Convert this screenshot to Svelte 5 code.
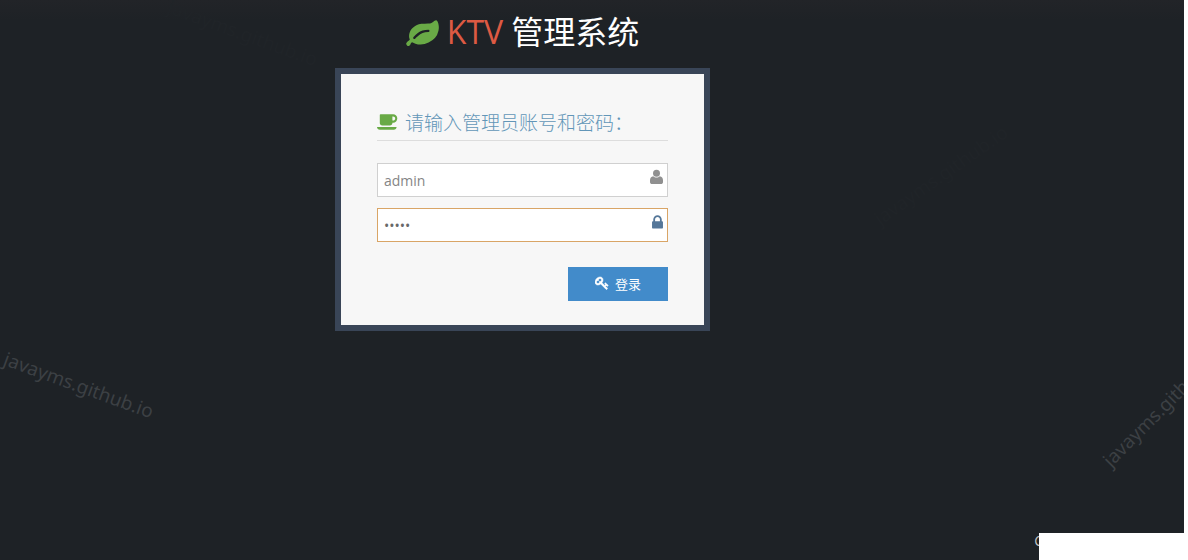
<script>
  let account = $state('admin');
  let password = $state('admin');

  function submit(event) {
    event.preventDefault();
  }
</script>

<div class="page">
  <span class="mark mark-left">javayms.github.io</span>
  <span class="mark mark-right">javayms.github.io</span>
  <span class="mark mark-faint mark-upper">javayms.github.io</span>
  <span class="mark mark-faint mark-top">javayms.github.io</span>

  <main class="login">
    <h1>
      <svg class="leaf" viewBox="0 0 1792 1536" aria-hidden="true"><path d="M1280 704q0-26-19-45t-45-19q-172 0-318 49.5t-259.5 134-235.5 219.5q-19 21-19 45 0 26 19 45t45 19q24 0 45-19 27-24 74-71t67-66q137-124 268.5-176t313.5-52q26 0 45-19t19-45zm512-198q0 95-20 193-46 224-184.5 383t-357.5 268q-214 108-438 108-148 0-286-47-15-5-88-42t-96-37q-16 0-39.5 32t-45 70-52.5 70-60 32q-43 0-63.5-17.5t-45.5-59.5q-2-4-6-11t-5.5-10-3-9.5-1.5-13.5q0-35 31-73.5t68-65.5 68-56 31-48q0-4-14-38t-16-44q-9-51-9-104 0-115 43.5-220t119-184.5 170.5-139 204-95.5q55-18 145-25.5t179.5-9 178.5-6 163.5-24 113.5-56.5l29.5-29.5 29.5-28 27-20 36.5-16 43.5-4.5q39 0 70.5 46t47.5 112 24 124 8 96z" /></svg>
      <span class="brand">KTV</span>
      <span class="product">管理系统</span>
    </h1>

    <section class="card">
      <h2>
        <svg class="coffee" viewBox="0 0 1920 1792" aria-hidden="true"><path d="M1664 576q0-80-56-136t-136-56h-64v384h64q80 0 136-56t56-136zm-1664 768h1792q0 106-75 181t-181 75h-1280q-106 0-181-75t-75-181zm1856-768q0 159-112.5 271.5t-271.5 112.5h-64v32q0 92-66 158t-158 66h-704q-92 0-158-66t-66-158v-736q0-26 19-45t45-19h1152q159 0 271.5 112.5t112.5 271.5z" /></svg>
        <span>请输入管理员账号和密码：</span>
      </h2>

      <form onsubmit={submit}>
        <label class="field">
          <input type="text" aria-label="账号" bind:value={account} />
          <svg class="user" viewBox="0 0 13 18" aria-hidden="true"><circle cx="6.500" cy="4.300" r="3.500" /><path d="M3.200 7.200C1.200 7.400 0 8.900 0 11.300v1.600C0 14.300.9 15 2.200 15h8.600c1.300 0 2.200-.7 2.200-2.100v-1.600c0-2.400-1.200-3.900-3.200-4.100C8.900 8.100 7.800 8.600 6.500 8.600S4.100 8.100 3.200 7.200z" /></svg>
        </label>
        <label class="field active">
          <input type="password" aria-label="密码" bind:value={password} />
          <svg class="lock" viewBox="0 0 1152 1792" aria-hidden="true"><path d="M320 768h512v-192q0-106-75-181t-181-75-181 75-75 181v192zm832 96v576q0 40-28 68t-68 28h-960q-40 0-68-28t-28-68v-576q0-40 28-68t68-28h32v-192q0-184 132-316t316-132 316 132 132 316v192h32q40 0 68 28t28 68z" /></svg>
        </label>
        <button type="submit">
          <svg class="key" viewBox="0 0 1792 1792" aria-hidden="true"><path d="M832 512q0-80-56-136t-136-56-136 56-56 136q0 42 19 83-41-19-83-19-80 0-136 56t-56 136 56 136 136 56 136-56 56-136q0-42-19-83 41 19 83 19 80 0 136-56t56-136zm851 704q0 17-49 66t-66 49q-9 0-28.5-16t-36.5-33-38.5-40-24.5-26l-96 96 220 220q28 28 28 68 0 42-39 81t-81 39q-40 0-68-28l-671-671q-176 131-365 131-163 0-265.5-102.5t-102.5-265.5q0-160 95-313t248-248 313-95q163 0 265.5 102.5t102.5 265.5q0 189-131 365l355 355 96-96q-3-3-26-24.5t-40-38.5-33-36.5-16-28.5q0-17 49-66t66-49q13 0 23 10 6 6 46 44.5t82 79.5 86.5 86 73 78 28.5 41z" /></svg>
          <span>登录</span>
        </button>
      </form>
    </section>
  </main>

  <span class="credit">C</span>
  <div class="cover"></div>
</div>

<style>
  :global(body) {
    margin: 0;
    background: #1e2126;
  }

  .page {
    position: relative;
    box-sizing: border-box;
    min-height: 100vh;
    padding-right: 139px;
    overflow: hidden;
    border-right: 4px solid #fff;
    background: linear-gradient(#222428, #1e2226 20px);
    font-family: "Open Sans", "Noto Sans CJK SC", sans-serif;
    font-size: 14px;
  }

  .login {
    position: relative;
    width: 375px;
    max-width: 100%;
    margin: 0 auto;
  }

  svg {
    display: block;
    flex: none;
    fill: currentColor;
  }

  h1 {
    display: flex;
    align-items: center;
    justify-content: center;
    gap: 8px;
    margin: 0;
    padding-bottom: 4px;
    font-size: 32px;
    font-weight: 400;
    line-height: 64px;
  }

  .leaf {
    width: 33px;
    height: 28px;
    color: #69aa46;
  }

  .brand {
    color: #dd5a43;
  }

  .product {
    color: #fff;
  }

  .card {
    box-sizing: border-box;
    padding: 34px 36px 24px;
    border: 6px solid #394557;
    background: #f7f7f7;
  }

  h2 {
    display: flex;
    align-items: center;
    gap: 7px;
    margin: 0 0 22px;
    padding-bottom: 4px;
    border-bottom: 1px solid #ddd;
    font-size: 19px;
    font-weight: 300;
    line-height: 28px;
    white-space: nowrap;
  }

  h2 span {
    color: #6296b8;
    font-family: "Noto Sans CJK SC", sans-serif;
  }

  .coffee {
    width: 21px;
    height: 20px;
    color: #69aa46;
  }

  form {
    display: flex;
    flex-direction: column;
    gap: 11px;
  }

  .field {
    position: relative;
    display: block;
    color: #909090;
  }

  input {
    display: block;
    box-sizing: border-box;
    width: 100%;
    height: 34px;
    padding: 0 24px 0 6px;
    border: 1px solid #d0d0d0;
    border-radius: 0;
    outline: 0;
    background: #fff;
    color: #858585;
    font: inherit;
  }

  .active {
    color: #557799;
  }

  .active input {
    border-color: #d9a566;
    color: #696969;
  }

  .field svg {
    position: absolute;
    top: 6px;
    right: 5px;
    height: 18px;
  }

  .user {
    width: 13px;
  }

  .field .lock {
    width: 11px;
    height: 17px;
  }

  button {
    display: flex;
    align-items: center;
    justify-content: center;
    align-self: flex-end;
    gap: 6px;
    height: 34px;
    margin-top: 14px;
    padding: 0 27px 2px;
    border: 0;
    background: #428bca;
    color: #fff;
    font: inherit;
    font-size: 13px;
  }

  .key {
    width: 14px;
    height: 14px;
    stroke: currentColor;
    stroke-width: 70;
  }

  .mark {
    position: absolute;
    color: #3c4044;
    font-family: "Noto Sans", sans-serif;
    font-size: 19px;
    line-height: 26px;
    white-space: nowrap;
  }

  .mark-left {
    top: 372px;
    left: 0;
    transform: rotate(20deg);
  }

  .mark-right {
    top: 450px;
    left: 1106px;
    transform: rotate(-45deg);
    transform-origin: 0 50%;
  }

  .mark-faint {
    color: #202428;
  }

  .mark-upper {
    top: 162px;
    left: 862px;
    transform: rotate(-35deg);
  }

  .mark-top {
    top: 20px;
    left: 164px;
    transform: rotate(20deg);
  }

  .credit {
    position: absolute;
    right: 141px;
    bottom: 9px;
    color: #c4c5c7;
    line-height: 20px;
  }

  .cover {
    position: absolute;
    right: 0;
    bottom: 0;
    width: 145px;
    height: 27px;
    background: #fff;
  }
</style>
